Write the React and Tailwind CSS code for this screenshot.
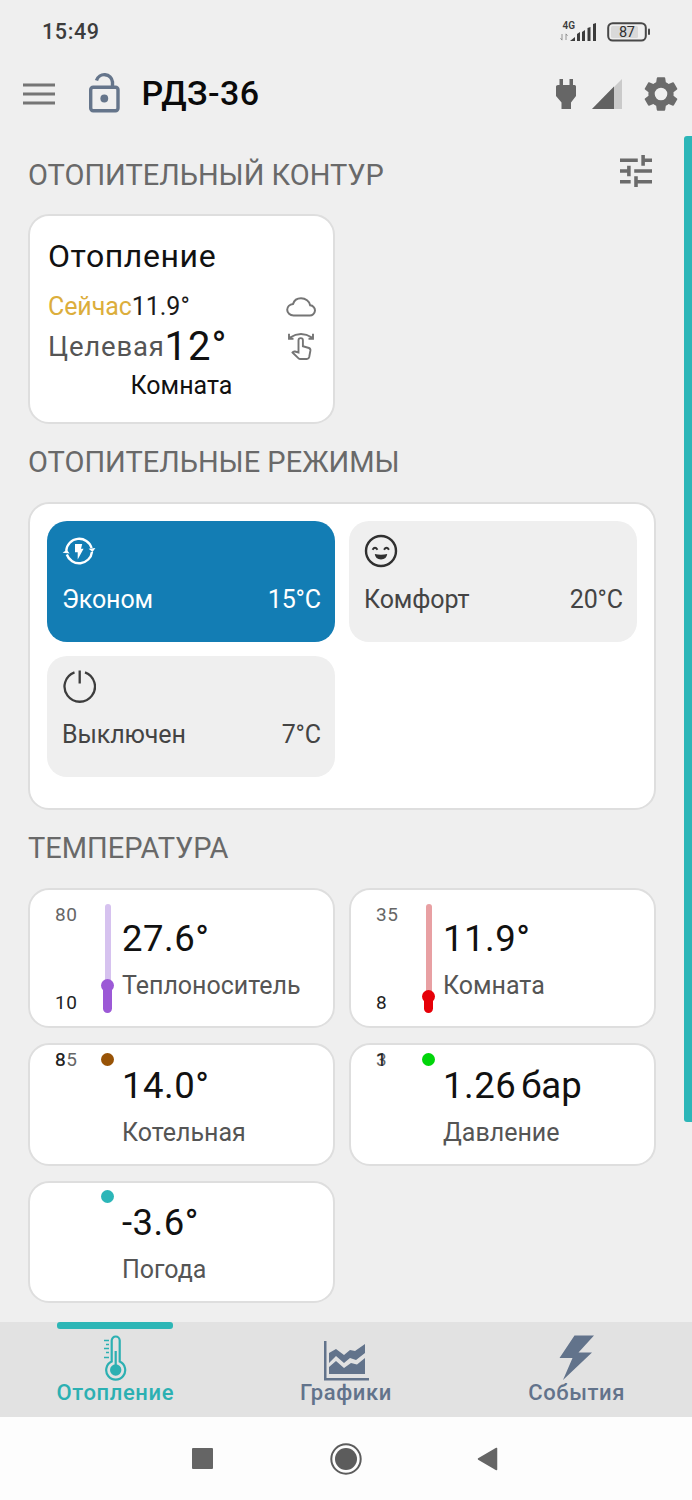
const FONT = "font-[Roboto,'Noto_Sans',sans-serif]";

function StatusBar() {
  return (
    <div className="flex h-[62px] shrink-0 items-center justify-between pl-[42px] pr-[41px] pt-[2px]">
      <span className="text-[21.5px] font-medium leading-6 tracking-[0.6px] text-[#3c3c3c]">15:49</span>
      <div className="flex items-center gap-[10px]">
        <svg width="37" height="22" viewBox="0 0 37 22" fill="#3c3c3c">
          <text x="2.500" y="8" fontSize="10" fontWeight="600" fontFamily="Roboto, sans-serif" textLength="12.500">4G</text>
          <path d="M2 13v6M0.500 17.200l1.500 2M6 19v-6M7.500 14.800l-1.500-2" stroke="#8a8a8a" fill="none" strokeWidth="0.900" />
          <path d="M10 20l5-4v4zM17 13l3-2v9h-3zM22 11l3-2v11h-3zM27.500 7l3-1v14h-3zM33 3l3-1v18h-3z" />
        </svg>
        <svg width="44" height="20" viewBox="0 0 44 20">
          <rect x="1.200" y="1.200" width="37.600" height="17.300" rx="4.500" fill="none" stroke="#484848" strokeWidth="2" />
          <rect x="4" y="4" width="27" height="12" rx="1.500" fill="#d9d9d9" />
          <rect x="41" y="6.500" width="2" height="6.500" rx="1" fill="#484848" />
          <text x="12" y="15" fontSize="14.500" fill="#303030" fontFamily="Roboto, sans-serif" textLength="16">87</text>
        </svg>
      </div>
    </div>
  );
}

function AppBar() {
  return (
    <div className="flex h-[64px] shrink-0 items-center pl-[23px] pr-[10px]">
      <svg width="32" height="22" viewBox="0 0 32 22" fill="#757575">
        <rect width="32" height="3" y="0.500" />
        <rect width="32" height="3" y="9.500" />
        <rect width="32" height="3" y="18.500" />
      </svg>
      <svg className="-mt-[4px] ml-[33px]" width="33" height="42" viewBox="0 0 33 42" fill="none" stroke="#65758b">
        <rect x="2.700" y="16.200" width="27.300" height="23.500" rx="2.500" strokeWidth="3.400" />
        <path d="M8.500 9.500a8.200 8.200 0 0 1 16 1.500v5" strokeWidth="3.400" />
        <circle cx="16.300" cy="27.500" r="3.900" fill="#65758b" stroke="none" />
      </svg>
      <h1 className="-mt-[3px] ml-[20.5px] text-[34px] font-medium leading-10 tracking-[0.4px] text-[#0a0a0a]">РДЗ-36</h1>
      <div className="ml-auto flex items-center">
        <svg width="22" height="32" viewBox="0 0 22 32" fill="#666">
          <path d="M4.500 1h3.500v6h6.500V1H18v6h1.500Q21 7 21 8.500V18l-5 6.500V31H6.500v-6.500L1 18V8.500Q1 7 3 7h1.500z" />
        </svg>
        <svg className="ml-[14px]" width="32" height="32" viewBox="0 0 32 32">
          <path d="M31 1v30H1z" fill="#cacaca" />
          <path d="M23 8.500V31H1z" fill="#616161" />
        </svg>
        <svg className="ml-[17px]" width="42" height="42" viewBox="0 0 24 24" fill="#6b6b6b">
          <path d="M19.140 12.940c.040-.300.060-.610.060-.940 0-.320-.020-.640-.070-.940l2.030-1.580a.490.490 0 0 0 .120-.610l-1.920-3.320a.488.488 0 0 0-.590-.220l-2.390.960c-.500-.380-1.030-.700-1.620-.940l-.360-2.540a.484.484 0 0 0-.480-.410h-3.840c-.240 0-.430.170-.470.410l-.360 2.540c-.590.240-1.130.570-1.620.940l-2.390-.960c-.220-.080-.470 0-.590.220L2.740 8.870c-.120.210-.080.470.120.610l2.030 1.580c-.050.300-.090.630-.090.940s.020.640.070.940l-2.030 1.580a.490.490 0 0 0-.120.610l1.920 3.320c.120.220.370.290.590.220l2.390-.960c.500.380 1.030.700 1.620.940l.360 2.540c.050.240.240.410.480.410h3.840c.240 0 .440-.170.470-.410l.360-2.540c.590-.240 1.130-.560 1.620-.940l2.390.960c.220.080.470 0 .590-.220l1.920-3.320c.120-.220.070-.470-.120-.610l-2.010-1.580zM12 15.600a3.600 3.600 0 1 1 0-7.200 3.600 3.600 0 0 1 0 7.200z" />
        </svg>
      </div>
    </div>
  );
}

function SectionTitle({ children }) {
  return <h2 className="text-[29px] leading-10 text-[#696969]">{children}</h2>;
}

function TuneIcon() {
  return (
    <svg width="32" height="32" viewBox="3 3 18 18" fill="#6b6b6b">
      <path d="M3 17v2h6v-2H3zM3 5v2h10V5H3zm10 16v-2h8v-2h-8v-2h-2v6h2zM7 9v2H3v2h4v2h2V9H7zm14 4v-2H11v2h10zm-6-4h2V7h4V5h-4V3h-2v6z" />
    </svg>
  );
}

function CircuitCard() {
  return (
    <div className="mt-[19px] h-[210px] w-[307px] rounded-[21px] border-2 border-[#dedede] bg-white px-[18px] pt-[19.5px]">
      <div className="text-[32px] leading-10 tracking-[0.6px] text-[#111]">Отопление</div>
      <div className="mt-[15px] flex h-[33px] items-center">
        <span className="text-[25px] leading-8 tracking-[-0.1px] text-[#dcae3c]">Сейчас</span>
        <span className="text-[25px] leading-8 text-[#1a1a1a]">11.9°</span>
        <svg className="ml-auto -mr-px" width="30" height="20" viewBox="0 0 30 20" fill="none" stroke="#757575" strokeWidth="2">
          <path d="M7.500 18.500h16a5 5 0 0 0 .700-10.200C23.500 4 19.500 1.300 15 1.300c-4 0-6.800 2-7.900 5.600-3.500.400-5.900 2.900-5.900 5.900 0 3.200 2.800 5.700 6.300 5.700z" />
        </svg>
      </div>
      <div className="flex h-[46px] items-center">
        <span className="text-[27.5px] leading-8 tracking-[0.8px] text-[#555]">Целевая</span>
        <span className="text-[40px] leading-10 tracking-[1px] text-[#111]">12°</span>
        <svg className="ml-auto" width="28" height="29" viewBox="0 0 28 29" fill="none" stroke="#757575" strokeWidth="1.900">
          <path d="M3 5.500Q14-1.500 25 5.500M2 1.800v5h4.500M26 1.800v5h-4.500" />
          <path d="M11.500 19.500V8.300a2.200 2.200 0 0 1 4.400 0v5.900l6 1.800q1.800.700 1.500 2.700l-1.200 6.300q-.500 2-2.300 2h-6.400q-1.300 0-2.200-.900L5.500 20.500q.700-1.300 2.500-1l3.500 1z" />
        </svg>
      </div>
      <div className="text-center text-[25px] leading-8 text-[#111]">Комната</div>
    </div>
  );
}

function EcoIcon() {
  return (
    <svg width="34" height="34" viewBox="0 0 34 34" fill="none" stroke="#fff" strokeWidth="2.400">
      <path d="M4.200 16.800A13 13 0 0 1 29.600 14M30 17.800A13 13 0 0 1 4.800 20.500" />
      <path d="M.6 18.800l4.200-3 2.800 3.600zM26.600 14.800l6.800-.8-2.800 4z" fill="#fff" stroke="none" />
      <path d="M13 10h7.200l-1.200 4.800h2.600L15.700 25.500v-7.200H13z" fill="#fff" stroke="none" />
    </svg>
  );
}

function SmileIcon() {
  return (
    <svg width="34" height="34" viewBox="0 0 34 34" fill="none" stroke="#303030" strokeWidth="2.400">
      <circle cx="17" cy="17" r="15" />
      <path d="M8.500 15.800q2.500-4 5 0M20 15.800q2.500-4 5 0" strokeWidth="1.900" />
      <path d="M10.800 20q6.200 1.500 12.400 0-.500 5.400-6.200 5.400T10.800 20z" fill="#303030" stroke="none" />
    </svg>
  );
}

function PowerIcon() {
  return (
    <svg width="34" height="34" viewBox="0 0 34 34" fill="none" stroke="#3d3d3d" strokeWidth="2.300">
      <path d="M12.500 2.300a15.200 15.200 0 1 0 10.500 0M17.700 .5v13" />
    </svg>
  );
}

function ModeTile({ icon, name, value, active }) {
  return (
    <div className={`flex h-[121px] flex-col rounded-[20px] pl-[15px] pr-[14px] pt-[13.5px] ${active ? "bg-[#137db4] text-white" : "bg-[#efefef] text-[#444]"}`}>
      {icon}
      <div className="mt-[15.5px] flex justify-between text-[25px] leading-8 tracking-[-0.1px]">
        <span>{name}</span>
        <span>{value}</span>
      </div>
    </div>
  );
}

function Gauge({ level, trackClass, fillClass }) {
  return (
    <div className="flex h-full w-[13px] flex-col items-center">
      {level != null && <div className={`w-[6px] rounded-t-full ${trackClass}`} style={{ height: level }} />}
      <div className={`size-[13px] shrink-0 rounded-full ${fillClass} ${level != null ? "-mt-1" : ""}`} />
      {level != null && <div className={`-mt-[6px] w-[9px] flex-1 rounded-b-full ${fillClass}`} />}
    </div>
  );
}

function SensorCard({ tall, max, min, level, trackClass, fillClass, value, unit, label }) {
  return (
    <div className={`flex rounded-[21px] border-2 border-[#dedede] bg-white pl-[25px] ${tall ? "h-[140px] pt-[14px]" : "h-[122.5px] pt-[7.5px]"}`}>
      <div className={`relative flex w-[46px] flex-col justify-between text-[19px] leading-5 tracking-[0.5px] ${tall ? "h-[110px]" : "h-5 -mt-[3px]"}`}>
        <span className={tall ? "mt-px text-[#666]" : "text-[#666]"}>{max}</span>
        <span className={tall ? "mb-px text-[#222]" : "absolute left-0 top-0 text-[#222]"}>{min}</span>
      </div>
      <div className={tall ? "h-[109px]" : "h-5"}>
        <Gauge level={level} trackClass={trackClass} fillClass={fillClass} />
      </div>
      <div className={`ml-[8px] ${tall ? "pt-[14px]" : "pt-[12px]"}`}>
        <div className="flex text-[36.5px] leading-[42px] tracking-[0.5px] text-[#111]">
          {value}
          {unit && <span className="ml-[5px] tracking-[0px]">{unit}</span>}
        </div>
        <div className="mt-[10px] text-[25px] leading-8 text-[#555]">{label}</div>
      </div>
    </div>
  );
}

function ThermometerIcon() {
  return (
    <svg width="24" height="46" viewBox="0 0 24 46" fill="none" stroke="#2cb0b2" strokeWidth="2.200">
      <path d="M8.700 26.500V5.500a4 4 0 0 1 8 0v21a9.500 9.500 0 1 1-8 0z" />
      <circle cx="12.700" cy="35" r="5.700" fill="#2cb0b2" stroke="none" />
      <path d="M12.700 16v16" />
      <path d="M1 5.500h5M3 9.500h3M1 13.500h5M3 17.500h3M1 22.500h5" strokeWidth="1.400" />
    </svg>
  );
}

function ChartIcon() {
  return (
    <svg width="46" height="42" viewBox="0 0 46 42" fill="#62738b">
      <path d="M1 2h2.500v37H46v2.500H1z" />
      <path d="M6 14l7-4 8 6 6-5 5 1 10-7v9l-9 7-6-2-6 5-8-7-7 7z" />
      <path d="M6 28l7-6 8 7 7-5 6 1.500 8-6.500v16H6z" />
    </svg>
  );
}

function BoltIcon() {
  return (
    <svg width="36" height="46" viewBox="0 0 36 46" fill="#62738b">
      <path d="M15.500.5H35L19.500 17.500H33L4 45l9.500-22H.5z" />
    </svg>
  );
}

function Tab({ icon, label, active }) {
  return (
    <div className={`flex flex-1 flex-col items-center ${active ? "text-[#2cb0b2]" : "text-[#62738b]"}`}>
      <div className={`h-[7px] w-[116px] rounded-[3px] ${active ? "bg-[#2cb6b6]" : ""}`} />
      <div className="mt-[6px] flex h-[46px] items-end">{icon}</div>
      <div className="-mt-[0.5px] text-[22px] font-medium leading-6 tracking-[0.6px]">{label}</div>
    </div>
  );
}

export default function App() {
  return (
    <div className={`relative flex h-[1500px] w-[692px] flex-col overflow-hidden bg-[#efefef] ${FONT}`}>
      <StatusBar />
      <AppBar />
      <main className="h-[1196px] px-[28px] pr-[36px] pt-[29px]">
        <div className="flex h-10 items-center justify-between">
          <SectionTitle>ОТОПИТЕЛЬНЫЙ КОНТУР</SectionTitle>
          <div className="-mt-[8px] mr-[4px]"><TuneIcon /></div>
        </div>
        <CircuitCard />
        <div className="mt-[18px]"><SectionTitle>ОТОПИТЕЛЬНЫЕ РЕЖИМЫ</SectionTitle></div>
        <div className="mt-[20px] grid h-[308px] grid-cols-2 content-start gap-x-[14px] gap-y-[14.5px] rounded-[21px] border-2 border-[#dedede] bg-white px-[17px] pt-[16.5px]">
          <ModeTile icon={<EcoIcon />} name="Эконом" value="15°C" active />
          <ModeTile icon={<SmileIcon />} name="Комфорт" value="20°C" />
          <ModeTile icon={<PowerIcon />} name="Выключен" value="7°C" />
        </div>
        <div className="mt-[18px]"><SectionTitle>ТЕМПЕРАТУРА</SectionTitle></div>
        <div className="mt-[20px] grid grid-cols-2 gap-x-[14px] gap-y-[15px]">
          <SensorCard tall max="80" min="10" level={79} trackClass="bg-[#d6c2ef]" fillClass="bg-[#9c59d6]" value="27.6°" label="Теплоноситель" />
          <SensorCard tall max="35" min="8" level={90} trackClass="bg-[#e8a0a3]" fillClass="bg-[#e60008]" value="11.9°" label="Комната" />
          <SensorCard max="85" min="8" fillClass="bg-[#985306]" value="14.0°" label="Котельная" />
          <SensorCard max="3" min="1" fillClass="bg-[#00d50a]" value="1.26" unit="бар" label="Давление" />
          <SensorCard fillClass="bg-[#2cb6b8]" value="-3.6°" label="Погода" />
        </div>
      </main>
      <nav className="flex h-[95px] shrink-0 bg-[#e2e2e2]">
        <Tab icon={<ThermometerIcon />} label="Отопление" active />
        <Tab icon={<ChartIcon />} label="Графики" />
        <Tab icon={<BoltIcon />} label="События" />
      </nav>
      <div className="flex h-[83px] shrink-0 items-center bg-[#fdfdfd] pl-[192px]">
        <svg width="21" height="21" viewBox="0 0 21 21"><rect width="21" height="21" rx="1" fill="#656565" /></svg>
        <svg className="ml-[117px]" width="32" height="32" viewBox="0 0 32 32">
          <circle cx="16" cy="16" r="14.700" fill="none" stroke="#5c5c5c" strokeWidth="2" />
          <circle cx="16" cy="16" r="11" fill="#5c5c5c" />
        </svg>
        <svg className="ml-[115px]" width="21" height="24" viewBox="0 0 21 24">
          <path d="M1.500 12L19.500 1.500v21z" fill="#656565" stroke="#656565" strokeWidth="1.500" strokeLinejoin="round" />
        </svg>
      </div>
      <div className="absolute right-0 top-[136px] h-[986px] w-[8px] rounded-l-[3px] bg-[#2cb6b8]" />
    </div>
  );
}
